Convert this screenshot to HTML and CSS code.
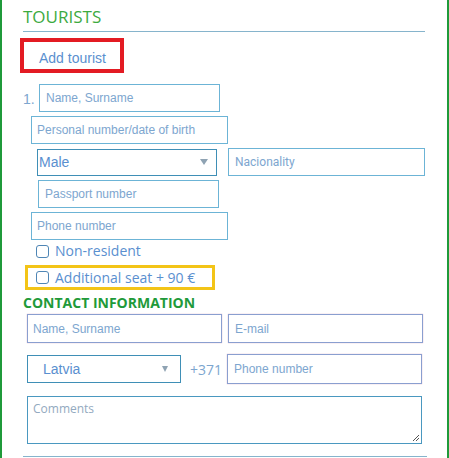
FILE: index.html
```html
<!DOCTYPE html>
<html>
<head>
<meta charset="utf-8">
<link rel="stylesheet" href="styles.css">
</head>
<body>
<div class="panel">
  <h2 class="title">TOURISTS</h2>
  <div class="add-box"><span class="add-link">Add tourist</span></div>

  <div class="row r1"><span class="num">1.</span><div class="field f-name">Name, Surname</div></div>
  <div class="row r2"><div class="field f-pers">Personal number/date of birth</div></div>
  <div class="row r3">
    <div class="select s-male"><span>Male</span><span class="arrow"></span></div>
    <div class="field f-nat">Nacionality</div>
  </div>
  <div class="row r4"><div class="field f-pass">Passport number</div></div>
  <div class="row r5"><div class="field f-phone">Phone number</div></div>
  <div class="row r6 check"><span class="box"></span><span class="clabel">Non-resident</span></div>
  <div class="seat"><span class="box"></span><span class="clabel">Additional seat + 90 €</span></div>

  <h3 class="subtitle">CONTACT INFORMATION</h3>
  <div class="row c1">
    <div class="field cf cf-name">Name, Surname</div>
    <div class="field cf cf-mail">E-mail</div>
  </div>
  <div class="row c2">
    <div class="select s-country"><span>Latvia</span><span class="arrow small"></span></div>
    <span class="code">+371</span>
    <div class="field cf cf-phone">Phone number</div>
  </div>
  <div class="row c3">
    <div class="textarea">Comments
      <svg class="grip" width="8" height="8" viewBox="0 0 8 8"><path d="M7 1L1 7M7 4L4 7" stroke="#555" stroke-width="1"/></svg>
    </div>
  </div>
  <div class="bottom-line"></div>
</div>
</body>
</html>
```

FILE: styles.css
```css
html, body {
  margin: 0;
  padding: 0;
  background: #fff;
}
.panel {
  width: 445px;
  height: 458px;
  border-left: 2px solid #1f9a3a;
  border-right: 2px solid #1f9a3a;
  box-sizing: content-box;
  overflow: hidden;
  font-family: Arial, "Liberation Sans", sans-serif;
  display: flex;
  flex-direction: column;
}
.title {
  margin: 6px 0 0 21px;
  width: 402px;
  font-family: "Open Sans", sans-serif;
  font-weight: 400;
  font-size: 17px;
  line-height: 22px;
  color: #3daa3f;
  border-bottom: 1px solid #86b4cc;
  padding-bottom: 3px;
  flex: none;
}
.add-box {
  margin: 6px 0 0 18px;
  width: 81px;
  height: 27px;
  border: 4px solid #e31b23;
  display: flex;
  align-items: center;
  padding-left: 15px;
  box-sizing: content-box;
  flex: none;
}
.add-link {
  font-size: 14px;
  color: #5a8fcf;
  margin-top: 4px;
}
.row {
  display: flex;
  align-items: center;
  flex: none;
}
.field {
  box-sizing: border-box;
  border: 1px solid #6cb4d6;
  height: 28px;
  font-size: 12px;
  color: #7da6cf;
  display: flex;
  align-items: center;
  padding-left: 6px;
  background: #fff;
}
.num {
  font-size: 14px;
  color: #7da6cf;
  width: 16px;
  margin-left: 21px;
  padding-top: 2px;
}
.r1 { margin-top: 11px; }
.f-name { width: 181px; }
.r2 { margin-top: 4px; margin-left: 29px; }
.f-pers { width: 197px; padding-left: 5px; }
.r3 { margin-top: 4px; margin-left: 35px; }
.select {
  box-sizing: border-box;
  display: flex;
  align-items: center;
  justify-content: space-between;
  background: #fff;
}
.s-male {
  width: 180px;
  height: 27px;
  border: 1px solid #3f8fb6;
  padding: 0 8px 0 1px;
  font-size: 14px;
  color: #5a8fcf;
}
.arrow {
  width: 0;
  height: 0;
  border-left: 4px solid transparent;
  border-right: 4px solid transparent;
  border-top: 6px solid #8fa3b3;
}
.arrow.small {
  border-left-width: 3.5px;
  border-right-width: 3.5px;
  border-top-width: 6px;
}
.f-nat {
  width: 197px;
  margin-left: 11px;
  font-family: Roboto, sans-serif;
  padding-left: 6px;
}
.r4 { margin-top: 4px; margin-left: 36px; }
.f-pass { width: 181px; padding-left: 6px; }
.r5 { margin-top: 4px; margin-left: 29px; }
.f-phone { width: 197px; padding-left: 5px; }
.check {
  margin-top: 2px;
  margin-left: 34px;
  height: 18px;
}
.box {
  width: 11px;
  height: 11px;
  border: 1px solid #4f86b5;
  border-radius: 3px;
  background: #fff;
  flex: none;
}
.clabel {
  font-family: "Open Sans", sans-serif;
  font-size: 14px;
  color: #5a8fcf;
  margin-left: 6px;
  line-height: 18px;
}
.seat {
  margin: 5px 0 0 23px;
  width: 176px;
  height: 19px;
  border: 3px solid #f3c417;
  display: flex;
  align-items: center;
  padding-left: 8px;
  flex: none;
}
.subtitle {
  margin: 4px 0 0 21px;
  font-family: "Open Sans", sans-serif;
  font-weight: 700;
  font-size: 14px;
  line-height: 17px;
  color: #1f9a3a;
  flex: none;
}
.cf {
  border: 1px solid #8a9fd0;
  box-shadow: 0 0 1px rgba(200, 130, 160, 0.7);
  height: 29px;
}
.c1 { margin-top: 3px; margin-left: 25px; }
.cf-name { width: 195px; padding-left: 5px; }
.cf-mail { width: 195px; margin-left: 6px; padding-left: 6px; }
.c2 { margin-top: 11px; margin-left: 25px; height: 30px; }
.s-country {
  width: 154px;
  height: 28px;
  border: 1px solid #3f8fb6;
  padding: 0 12px 0 15px;
  font-size: 14px;
  color: #5a8fcf;
}
.code {
  font-family: "Open Sans", sans-serif;
  font-size: 14px;
  color: #7da6cf;
  margin-left: 9px;
  width: 37px;
}
.cf-phone { width: 195px; height: 30px; padding-left: 6px; }
.c3 { margin-top: 12px; margin-left: 25px; }
.textarea {
  position: relative;
  box-sizing: border-box;
  width: 395px;
  height: 48px;
  border: 1px solid #4a98c0;
  font-family: "Open Sans", sans-serif;
  font-size: 12px;
  color: #93aac0;
  padding: 4px 0 0 5px;
  line-height: 16px;
}
.grip {
  position: absolute;
  right: 1px;
  bottom: 1px;
}
.bottom-line {
  margin: 12px 0 0 21px;
  width: 404px;
  border-top: 1px solid #86b4cc;
  flex: none;
}
```
